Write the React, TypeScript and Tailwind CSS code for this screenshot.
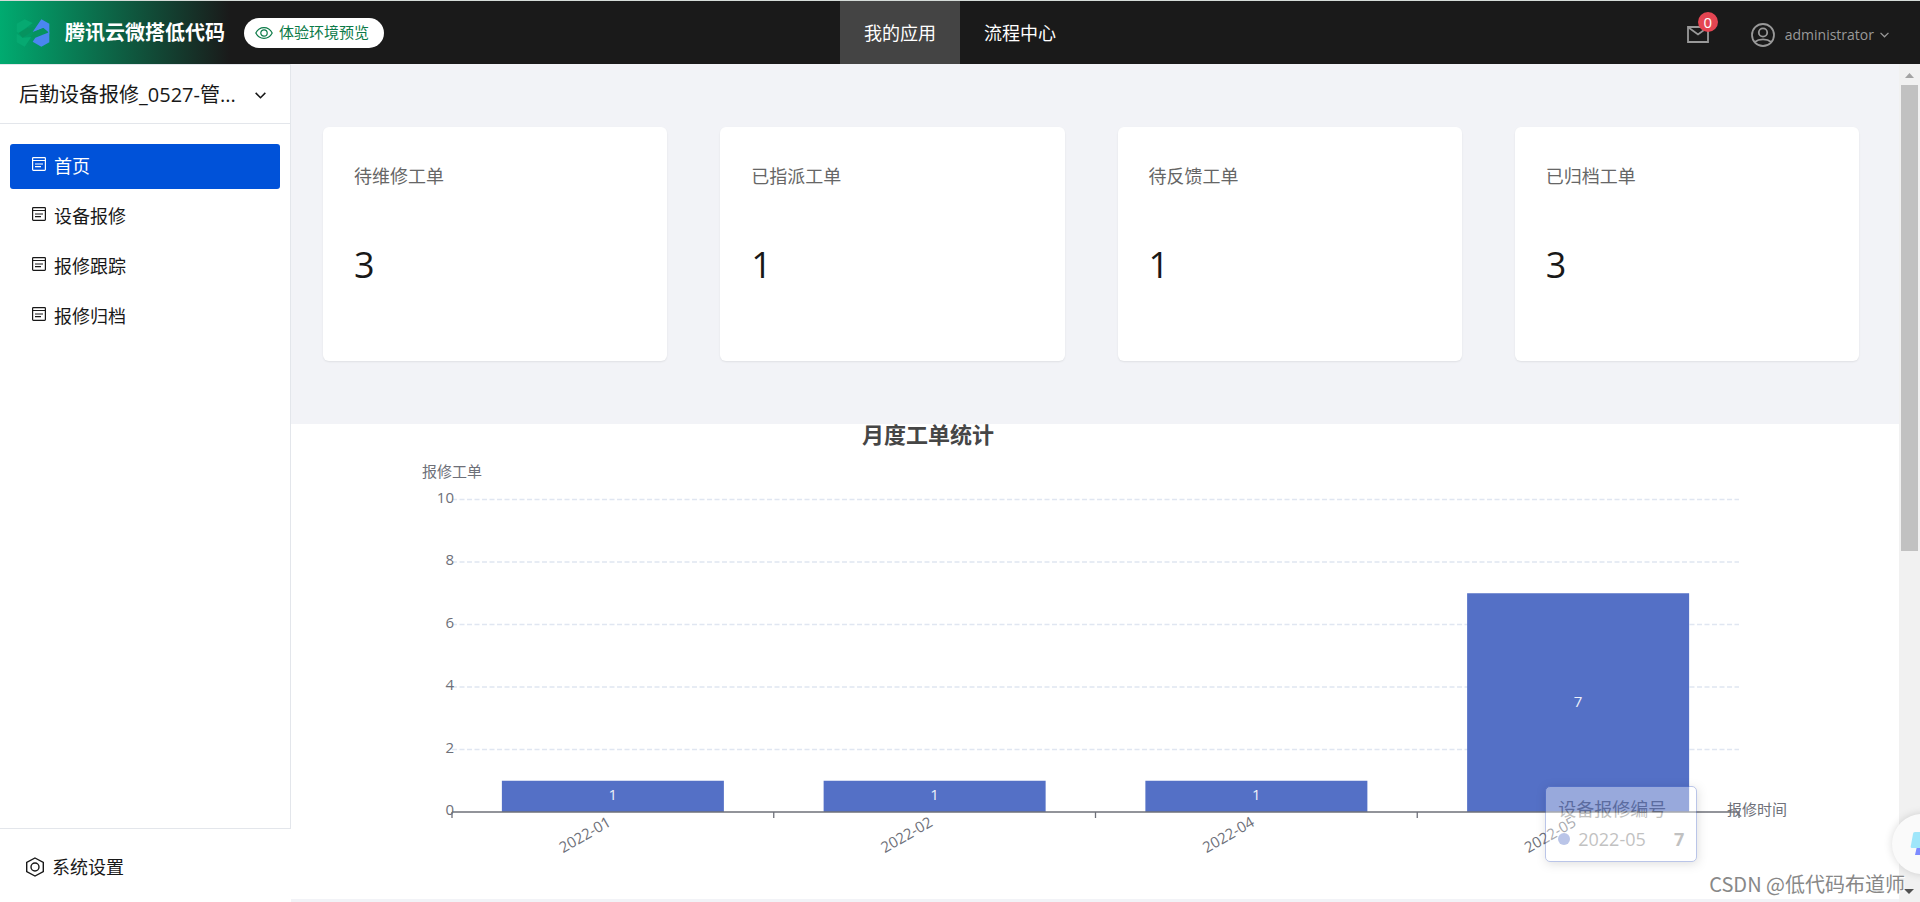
import React from 'react';

const menuItems = [
  { id: 'home', name: '首页', active: true },
  { id: 'repair', name: '设备报修', active: false },
  { id: 'track', name: '报修跟踪', active: false },
  { id: 'archive', name: '报修归档', active: false }
];

const stats = [
  { label: '待维修工单', value: 3 },
  { label: '已指派工单', value: 1 },
  { label: '待反馈工单', value: 1 },
  { label: '已归档工单', value: 3 }
];

const monthly = [
  { month: '2022-01', count: 1 },
  { month: '2022-02', count: 1 },
  { month: '2022-04', count: 1 },
  { month: '2022-05', count: 7 }
];

const yTicks = [0, 2, 4, 6, 8, 10];

function Logo() {
  return (
    <svg viewBox="0 0 102 84" className="w-[34px] h-7" aria-hidden="true">
      <path d="M2 14 26 1 50 12 34 24 8 42 2 38Z" fill="#06a971" />
      <path d="M2 44 20 56 46 54 26 83 2 70Z" fill="#06a971" />
      <path d="M8 42 34 27 56 24 44 40 20 56Z" fill="#06935f" />
      <path d="M76 1 100 14 100 44 82 27 50 39Z" fill="#4a86f0" />
      <path d="M44 55 56 38 82 27 96 38 84 46 58 56Z" fill="#06935f" />
      <path d="M100 40 100 70 76 83 50 68 58 56 84 46Z" fill="#4a86f0" />
    </svg>
  );
}

function EyeIcon() {
  return (
    <svg viewBox="0 0 18 14" className="w-[18px] h-[14px]" fill="none" stroke="currentColor" strokeWidth="1.2" aria-hidden="true">
      <path d="M.8 7C4.5-.2 13.5-.2 17.2 7 13.5 14.2 4.500 14.2.8 7Z" />
      <circle cx="9" cy="7" r="3.200" />
    </svg>
  );
}

function Chevron({ className }: { className: string }) {
  return (
    <svg viewBox="0 0 10 6" className={className} fill="none" stroke="currentColor" strokeWidth="1.4" aria-hidden="true">
      <path d="M.6.6 5 5 9.400.6" />
    </svg>
  );
}

function MailIcon() {
  return (
    <svg viewBox="0 0 22 17" className="w-[22px] h-[17px]" fill="none" stroke="currentColor" strokeWidth="1.800" aria-hidden="true">
      <path d="M1 1H21V16H1Z" />
      <path d="M1.500 1.500 11 8.500 20.500 1.500" />
    </svg>
  );
}

function UserIcon() {
  return (
    <svg viewBox="0 0 24 24" className="w-6 h-6" fill="none" stroke="currentColor" strokeWidth="1.800" aria-hidden="true">
      <circle cx="12" cy="12" r="11" />
      <circle cx="12" cy="9.500" r="4.200" />
      <path d="M3.800 19C8 15.600 16 15.600 20.200 19" />
    </svg>
  );
}

function PageIcon() {
  return (
    <svg viewBox="0 0 14 14" className="mb-[3px] w-[14px] h-[14px]" fill="none" stroke="currentColor" aria-hidden="true">
      <rect x=".6" y=".6" width="12.800" height="12.800" rx=".8" strokeWidth="1.200" />
      <path d="M1 3.500H13" strokeWidth="1" />
      <path d="M3 7H11M3 9.700H9" strokeWidth="1.200" />
    </svg>
  );
}

function SettingsIcon() {
  return (
    <svg viewBox="0 0 20 20" className="w-5 h-5" fill="none" stroke="currentColor" strokeWidth="1.400" aria-hidden="true">
      <path d="M10 1 18.300 5.500V14.500L10 19 1.700 14.500V5.500Z" />
      <circle cx="10" cy="10" r="4" />
    </svg>
  );
}

function Header() {
  return (
    <header className="grid grid-cols-[1fr_auto_1fr] h-16 shrink-0 border-t border-[#d5dcd8] bg-[linear-gradient(90deg,#00ab70_0px,#1a1a1a_230px)] text-white">
      <div className="flex items-center pl-4">
        <Logo />
        <span className="ml-[15px] text-xl font-bold">腾讯云微搭低代码</span>
        <button className="ml-[19px] flex h-[30px] items-center gap-[6px] rounded-full bg-white pl-[11px] pr-[15px] text-[15px] text-[#0c7a48]">
          <EyeIcon />
          体验环境预览
        </button>
      </div>
      <nav className="flex text-lg">
        <a href="#apps" className="flex w-[120px] items-center justify-center bg-[#444]">我的应用</a>
        <a href="#flows" className="flex w-[120px] items-center justify-center">流程中心</a>
      </nav>
      <div className="flex items-center justify-end pr-[31px] text-[#999]">
        <button className="relative mr-[42px] pt-1" aria-label="消息">
          <MailIcon />
          <span className="absolute -top-[10px] left-[11px] flex h-5 w-5 items-center justify-center rounded-full bg-[#e54552] text-[15px] text-white">0</span>
        </button>
        <button className="flex items-center pt-1 text-sm">
          <UserIcon />
          <span className="ml-[10px] mr-[6px]">administrator</span>
          <Chevron className="w-[9px] h-[6px]" />
        </button>
      </div>
    </header>
  );
}

function Sidebar() {
  return (
    <aside className="flex w-[291px] shrink-0 flex-col bg-white text-[#181818]">
      <div className="flex flex-1 flex-col border-t border-r border-b border-[#e3e6eb]">
        <button className="flex h-[59px] items-center border-b border-[#e3e6eb] pl-[19px] pr-6 pt-[2px] text-xl">
          <span>后勤设备报修_0527-管...</span>
          <Chevron className="ml-auto w-[11px] h-[7px]" />
        </button>
        <nav className="flex flex-col gap-[5px] px-[10px] py-5 text-lg">
          {menuItems.map((item) => (
            <a
              key={item.id}
              href={`#${item.id}`}
              className={`flex h-[45px] items-center gap-2 rounded-[3px] pb-[2px] pl-[22px] ${item.active ? 'bg-[#0052d9] text-white' : ''}`}
            >
              <PageIcon />
              {item.name}
            </a>
          ))}
        </nav>
      </div>
      <a href="#settings" className="flex h-[73px] items-center gap-[7px] pl-[25px] pt-[2px] text-lg">
        <SettingsIcon />
        系统设置
      </a>
    </aside>
  );
}

// Bar chart of work orders per month
function MonthlyChart() {
  const left = 161;
  const right = 1448;
  const base = 388;
  const unit = 31.25;
  const step = (right - left) / monthly.length;
  const barWidth = 222;

  return (
    <section className="relative bg-white">
      <svg viewBox="0 0 1608 475" className="block w-full overflow-visible" role="img" aria-label="月度工单统计">
        <text x="637" y="19" textAnchor="middle" fontSize="22" fontWeight="700" fill="#464646">月度工单统计</text>
        <text x="161" y="53" textAnchor="middle" fontSize="15" fill="#6e7079">报修工单</text>

        {yTicks.slice(1).map((t) => (
          <line key={t} x1={left} x2={right} y1={base - t * unit} y2={base - t * unit} stroke="#e0e6f1" strokeWidth="1.500" strokeDasharray="5 2.500" />
        ))}

        {monthly.map((m, i) => {
          const center = left + step * (i + 0.5);
          const height = m.count * unit;
          return (
            <g key={m.month}>
              <rect x={center - barWidth / 2} y={base - height} width={barWidth} height={height} fill="#5470c6" />
              <text x={center} y={base - height / 2 + 4} textAnchor="middle" fontSize="15" fill="#eef1f9">{m.count}</text>
              <text x={center - 4} y="402" textAnchor="end" fontSize="15" fill="#6e7079" transform={`rotate(-30 ${center - 4} 396)`}>{m.month}</text>
            </g>
          );
        })}

        <line x1={left} x2={right} y1={base} y2={base} stroke="#6e7079" strokeWidth="1.500" />
        {[0, 1, 2, 3, 4].map((i) => (
          <line key={i} x1={left + step * i} x2={left + step * i} y1={base} y2={base + 6} stroke="#6e7079" strokeWidth="1.300" />
        ))}
        {yTicks.map((t) => (
          <text key={t} x="163" y={base - t * unit + 3} textAnchor="end" fontSize="15" fill="#6e7079">{t}</text>
        ))}
        <text x="1436" y="391" fontSize="15" fill="#6e7079">报修时间</text>
      </svg>

      {/* Tooltip fading out over the last bar */}
      <div className="absolute left-[78%] top-[362px] flex w-[152px] flex-col gap-[6px] rounded-[5px] border border-[#5470c6] bg-white px-3 py-[10px] text-lg leading-6 text-[#666] opacity-40 shadow-[1px_2px_10px_rgba(0,0,0,0.3)]">
        <span>设备报修编号</span>
        <span className="flex items-center">
          <span className="mr-2 h-3 w-3 rounded-full bg-[#5470c6]" />
          2022-05
          <b className="ml-auto">7</b>
        </span>
      </div>
    </section>
  );
}

function ScrollBar() {
  return (
    <div className="flex w-[21px] shrink-0 flex-col items-center bg-[#f1f1f1]" aria-hidden="true">
      <svg viewBox="0 0 21 21" className="h-[21px] w-[21px]">
        <path d="M6 14 10.500 9 15 14Z" fill="#a3a3a3" />
      </svg>
      <div className="h-[466px] w-[17px] bg-[#c1c1c1]" />
      <svg viewBox="0 0 21 21" className="mt-auto h-[21px] w-[21px]">
        <path d="M5 8 10 13 15 8Z" fill="#505050" />
      </svg>
    </div>
  );
}

export default function App() {
  return (
    <div className="relative flex h-screen flex-col overflow-hidden font-['Open_Sans','Noto_Sans_CJK_SC',sans-serif]">
      <Header />
      <div className="flex min-h-0 flex-1">
        <Sidebar />
        <main className="min-w-0 flex-1 overflow-hidden bg-[#f2f3f7]">
          <div className="grid grid-cols-4 gap-[53px] pb-[63px] pl-8 pr-10 pt-[63px]">
            {stats.map((s) => (
              <div key={s.label} className="h-[234px] rounded-md bg-white px-[31px] pt-[35px] shadow-[0_1px_2px_rgba(0,0,0,0.08)]">
                <div className="text-lg leading-7 text-[#666]">{s.label}</div>
                <div className="mt-[47px] text-4xl leading-[56px] text-[#181818]">{s.value}</div>
              </div>
            ))}
          </div>
          <MonthlyChart />
        </main>
        <ScrollBar />
      </div>

      {/* Assistant button, half off the right edge */}
      <button className="absolute -right-8 bottom-7 flex h-[60px] w-[60px] items-center rounded-full bg-[#fafafa] pl-[18px] shadow-[0_0_8px_rgba(0,0,0,0.15)]" aria-label="助手">
        <svg viewBox="0 0 24 24" className="h-6 w-6" aria-hidden="true">
          <path d="M8 10H24V23H5Z" fill="#7d8bff" />
          <path d="M5 0H20L16 16H2Q0 16 1 13L3 2Q3 0 5 0Z" fill="#9fe6fa" />
        </svg>
      </button>
      <span className="absolute bottom-1 right-[15px] font-['Noto_Sans_CJK_SC',sans-serif] text-xl text-[#888] [text-shadow:1px_1px_0_#fff]">CSDN @低代码布道师</span>
    </div>
  );
}
